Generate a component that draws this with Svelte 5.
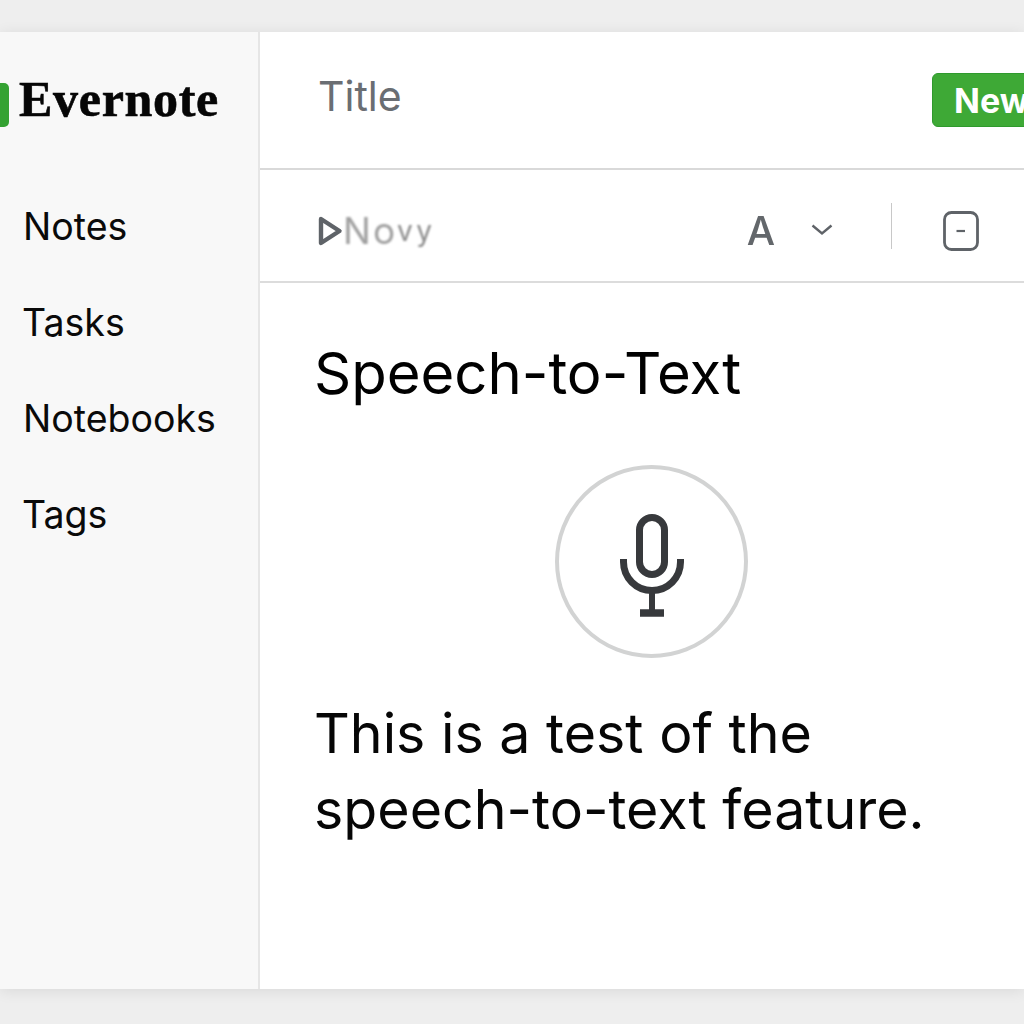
<script>
	const navItems = [
		{ label: 'Notes', cls: 'notes' },
		{ label: 'Tasks', cls: 'tasks' },
		{ label: 'Notebooks', cls: 'notebooks' },
		{ label: 'Tags', cls: 'tags' }
	];
</script>

<div class="page">
	<div class="window">
		<aside class="sidebar">
			<div class="brand">
				<span class="logo"></span>
				<span class="brand-name">Evernote</span>
			</div>
			<nav class="nav">
				{#each navItems as item}
					<div class="nav-item {item.cls}">{item.label}</div>
				{/each}
			</nav>
		</aside>

		<main class="main">
			<header class="topbar">
				<span class="title">Title</span>
				<button type="button" class="new-btn">New</button>
			</header>

			<div class="toolbar">
				<div class="font-picker">
					<svg class="play" width="26" height="34" viewBox="0 0 26 34" fill="none">
						<path d="M3 5 L21.5 17 L3 29 Z" stroke="#5f6368" stroke-width="4.4" stroke-linejoin="round" />
					</svg>
					<span class="font-name">No<span class="font-tail">vy</span></span>
				</div>
				<div class="tools">
					<span class="font-a">A</span>
					<svg class="chevron" width="24" height="14" viewBox="0 0 24 14" fill="none">
						<path d="M2.5 2.5 L12 10.5 L21.5 2.5" stroke="#5f6368" stroke-width="2.4" />
					</svg>
					<span class="divider"></span>
					<svg class="box" width="36" height="40" viewBox="0 0 36 40" fill="none">
						<rect x="1.5" y="1.5" width="33" height="37" rx="7" stroke="#5f6368" stroke-width="2.8" />
						<path d="M13.5 20 H22" stroke="#5f6368" stroke-width="2.2" />
					</svg>
				</div>
			</div>

			<article class="note">
				<h1>Speech-to-Text</h1>
				<div class="mic-wrap">
					<div class="mic">
						<svg width="66" height="106" viewBox="0 0 66 106" fill="none">
							<rect x="20.5" y="4.5" width="25" height="57" rx="12.5" stroke="#37393c" stroke-width="7" />
							<path d="M4.5 46 V49 A28.5 28.5 0 0 0 61.5 49 V46" stroke="#37393c" stroke-width="7" />
							<path d="M33 79 V98" stroke="#37393c" stroke-width="6" />
							<path d="M21 100 H45" stroke="#37393c" stroke-width="7.5" />
						</svg>
					</div>
				</div>
				<p>This is a test of the<br />speech-to-text feature.</p>
			</article>
		</main>
	</div>
</div>

<style>
	:global(body) {
		margin: 0;
	}

	.page {
		width: 1024px;
		height: 1024px;
		overflow: hidden;
		box-sizing: border-box;
		padding: 32px 0 35px;
		background: #eeeeee;
		font-family: Inter, 'Noto Sans', sans-serif;
		color: #000;
	}

	.window {
		display: flex;
		height: 100%;
		background: #fff;
		box-shadow: 0 2px 14px rgba(0, 0, 0, 0.09);
	}

	.sidebar {
		width: 260px;
		flex: none;
		box-sizing: border-box;
		background: #f8f8f8;
		border-right: 2px solid #e6e6e6;
	}

	.brand {
		display: flex;
		align-items: center;
		gap: 9px;
		margin: 51px 0 0 -15px;
		height: 44px;
	}

	.logo {
		width: 24px;
		height: 44px;
		background: #34a232;
		border-radius: 5px;
	}

	.brand-name {
		font-family: 'Liberation Serif', serif;
		font-weight: 700;
		font-size: 50px;
		line-height: 36px;
		letter-spacing: 0.7px;
		margin: 0 0 12px 1px;
		color: #060606;
		-webkit-text-stroke: 0.6px #060606;
	}

	.nav {
		display: flex;
		flex-direction: column;
		gap: 56px;
		margin-top: 80px;
		padding-left: 23px;
	}

	.nav-item {
		font-size: 37.5px;
		line-height: 40px;
		color: #0a0a0a;
	}

	.tasks,
	.tags {
		margin-left: -1px;
	}

	.main {
		flex: 1;
		min-width: 0;
		display: flex;
		flex-direction: column;
	}

	.topbar {
		height: 138px;
		flex: none;
		box-sizing: border-box;
		display: flex;
		align-items: center;
		justify-content: space-between;
		padding: 0 0 8px 58px;
		border-bottom: 2px solid #d9d9d9;
	}

	.title {
		font-size: 41px;
		color: #6a6e73;
	}

	.new-btn {
		width: 130px;
		height: 54px;
		margin-right: -38px;
		padding: 0 0 0 21px;
		margin-top: 8px;
		text-align: left;
		border: 1px solid #2f9a2d;
		border-radius: 6px;
		background: #3ea936;
		color: #fff;
		font-family: Inter, sans-serif;
		font-weight: 700;
		font-size: 34px;
	}

	.toolbar {
		height: 113px;
		flex: none;
		box-sizing: border-box;
		display: flex;
		align-items: center;
		justify-content: space-between;
		padding: 0 45px 0 58px;
		border-bottom: 2px solid #dcdcdc;
	}

	.font-picker {
		display: flex;
		align-items: center;
		margin-top: 10px;
	}

	.play {
		margin-right: -1px;
	}

	.font-name {
		font-size: 37px;
		color: #a0a0a0;
		filter: blur(1px);
		letter-spacing: 2px;
	}

	.font-tail {
		font-size: 28px;
		letter-spacing: 3.5px;
		vertical-align: 3px;
		color: #8a8a8a;
	}

	.tools {
		display: flex;
		align-items: center;
	}

	.font-a {
		font-size: 40px;
		font-weight: 500;
		color: #63676b;
		line-height: 40px;
		margin: 10px 35px 0 0;
		filter: blur(0.5px);
	}

	.chevron {
		margin: 8px 57px 0 0;
	}

	.divider {
		width: 1px;
		height: 46px;
		background: #c8c8c8;
		margin-right: 51px;
	}

	.box {
		margin-top: 10px;
	}

	.note {
		padding: 52px 40px 0 54px;
	}

	h1 {
		margin: 0;
		font-size: 58px;
		line-height: 76px;
		font-weight: 400;
	}

	.mic-wrap {
		display: flex;
		justify-content: flex-start;
		margin: 54px 0 0 241px;
	}

	.mic {
		width: 193px;
		height: 193px;
		box-sizing: border-box;
		border: 4px solid #d2d3d3;
		border-radius: 50%;
		display: flex;
		align-items: center;
		justify-content: center;
	}

	.mic svg {
		margin-top: 8px;
	}

	p {
		margin: 37px 0 0;
		font-size: 55.5px;
		line-height: 76px;
		color: #060606;
	}
</style>
